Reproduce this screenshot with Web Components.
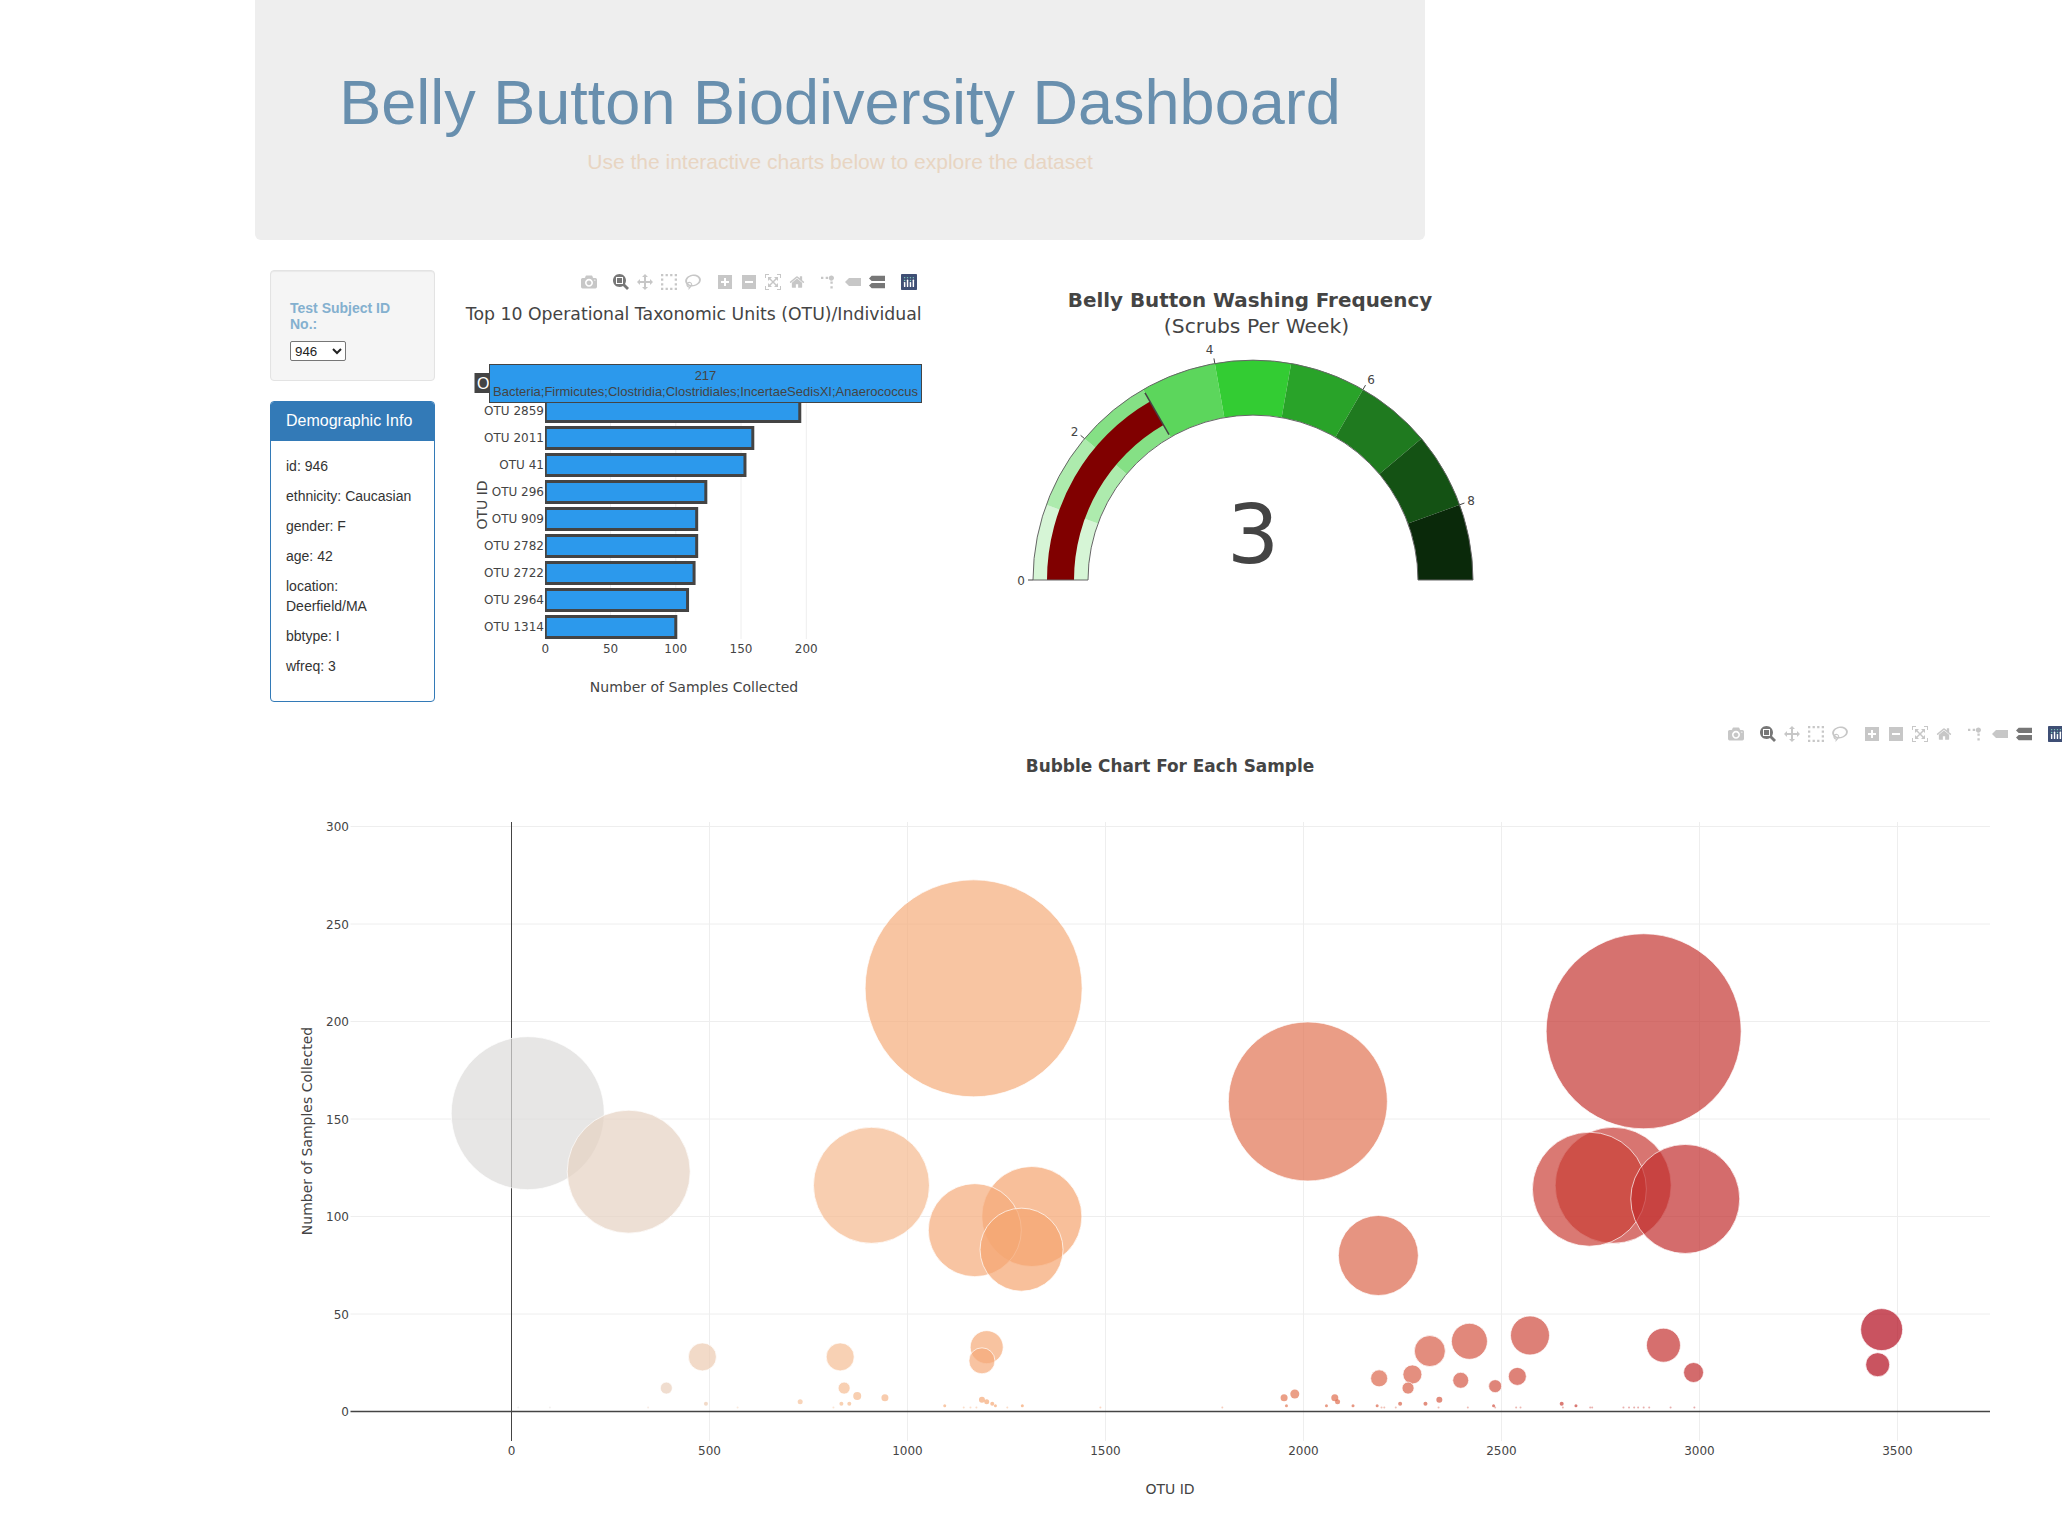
<!DOCTYPE html>
<html lang="en">
<head>
<meta charset="utf-8">
<title>Belly Button Biodiversity Dashboard</title>
<style>
html, body { margin: 0; height: 100%; overflow: hidden; background: #fff; }
body { font-family: "Liberation Sans", Arial, sans-serif; font-size: 14px; color: #333; }
.top-row { display: flex; align-items: flex-start; margin-top: 30px; padding-left: 270px; }
</style>
</head>
<body>
<bb-jumbotron>
	<span slot="title">Belly Button Biodiversity Dashboard</span>
	<span slot="lead">Use the interactive charts below to explore the dataset</span>
</bb-jumbotron>
<div class="top-row">
	<bb-sidebar>
		<bb-selector label="Test Subject ID No.:" value="946"></bb-selector>
		<bb-panel heading="Demographic Info">
			<p>id: 946</p>
			<p>ethnicity: Caucasian</p>
			<p>gender: F</p>
			<p>age: 42</p>
			<p>location: Deerfield/MA</p>
			<p>bbtype: I</p>
			<p>wfreq: 3</p>
		</bb-panel>
	</bb-sidebar>
	<bb-bar-chart></bb-bar-chart>
	<bb-gauge></bb-gauge>
</div>
<bb-bubble-chart></bb-bubble-chart>

<script>
// rutas de los iconos de la barra de plotly: [ancho, alto, ascent, path]
const ICONS = {
	camera: [1000, 1000, 850, 'M500 450c-83 0-150-67-150-150 0-83 67-150 150-150 83 0 150 67 150 150 0 83-67 150-150 150z m400 150h-120c-16 0-34 13-39 29l-31 93c-6 15-23 28-40 28h-340c-16 0-34-13-39-28l-31-94c-6-15-23-28-40-28h-120c-55 0-100-45-100-100v-450c0-55 45-100 100-100h800c55 0 100 45 100 100v450c0 55-45 100-100 100z m-400-550c-138 0-250 112-250 250 0 138 112 250 250 250 138 0 250-112 250-250 0-138-112-250-250-250z m365 380c-19 0-35 16-35 35 0 19 16 35 35 35 19 0 35-16 35-35 0-19-16-35-35-35z'],
	zoom: [1000, 1000, 850, 'm1000-25l-250 251c40 63 63 138 63 218 0 224-182 406-407 406-224 0-406-182-406-406s183-406 407-406c80 0 155 22 218 62l250-250 125 125z m-812 250l0 438 437 0 0-438-437 0z m62 375l313 0 0-312-313 0 0 312z'],
	pan: [1000, 1000, 850, 'm1000 350l-187 188 0-125-250 0 0 250 125 0-188 187-187-187 125 0 0-250-250 0 0 125-188-188 186-187 0 125 252 0 0-250-125 0 187-188 188 188-125 0 0 250 250 0 0-126 187 188z'],
	select: [1000, 1000, 850, 'm0 850l0-143 143 0 0 143-143 0z m286 0l0-143 143 0 0 143-143 0z m285 0l0-143 143 0 0 143-143 0z m286 0l0-143 143 0 0 143-143 0z m-857-286l0-143 143 0 0 143-143 0z m857 0l0-143 143 0 0 143-143 0z m-857-285l0-143 143 0 0 143-143 0z m857 0l0-143 143 0 0 143-143 0z m-857-286l0-143 143 0 0 143-143 0z m286 0l0-143 143 0 0 143-143 0z m285 0l0-143 143 0 0 143-143 0z m286 0l0-143 143 0 0 143-143 0z'],
	lasso: [1031, 1000, 850, 'm1018 538c-36 207-290 336-568 286-277-48-473-256-436-463 10-57 36-108 76-151-13-66 11-137 68-183 34-28 75-41 114-42l-55-70 0 0c-2-1-3-2-4-3-10-14-8-34 5-45 14-11 34-8 45 4 1 1 2 3 2 5l0 0 113 140c16 11 31 24 45 40 4 3 6 7 8 11 48-3 100 0 151 9 278 48 473 255 436 462z m-624-379c-80 14-149 48-197 96 42 42 109 47 156 9 33-26 47-66 41-105z m-187-74c-19 16-33 37-39 60 50-32 109-55 174-68-42-25-95-24-135 8z m360 75c-34-7-69-9-102-8 8 62-16 128-68 170-73 59-175 54-244-5-9 20-16 40-20 61-28 159 121 317 333 354s407-60 434-217c28-159-121-318-333-355z'],
	plus: [875, 1000, 850, 'm1 787l0-875 875 0 0 875-875 0z m687-500l-187 0 0-187-125 0 0 187-188 0 0 125 188 0 0 187 125 0 0-187 187 0 0-125z'],
	minus: [875, 1000, 850, 'm0 788l0-876 875 0 0 876-875 0z m688-500l-500 0 0 125 500 0 0-125z'],
	autoscale: [1000, 1000, 850, 'm250 850l-187 0-63 0 0-62 0-188 63 0 0 188 187 0 0 62z m688 0l-188 0 0-62 188 0 0-188 62 0 0 188 0 62-62 0z m-875-938l0 188-63 0 0-188 0-62 63 0 187 0 0 62-187 0z m875 188l0-188-188 0 0-62 188 0 62 0 0 62 0 188-62 0z m-125 188l-1 0-93-94-156 156 156 156 92-93 2 0 0 250-250 0 0-2 93-92-156-156-156 156 94 92 0 2-250 0 0-250 0 0 93 93 157-156-157-156-93 94 0 0 0-250 250 0 0 0-94 93 156 157 156-157-93-93 0 0 250 0 0 250z'],
	home: [928.6, 1000, 850, 'm786 296v-267q0-15-11-26t-25-10h-214v214h-143v-214h-214q-15 0-25 10t-11 26v267q0 1 0 2t0 2l321 264 321-264q1-1 1-4z m124 39l-34-41q-5-5-12-6h-2q-7 0-12 3l-386 322-386-322q-7-4-13-4-7 2-12 7l-35 41q-4 5-3 13t6 12l401 334q18 15 42 15t43-15l136-114v109q0 8 5 13t13 5h107q8 0 13-5t5-13v-227l122-102q5-5 6-12t-4-13z'],
	spike: [630, 630, 570, 'M512 409c0-57-46-104-103-104-57 0-104 47-104 104 0 57 47 103 104 103 57 0 103-46 103-103z m-327-39l92 0 0 92-92 0 0-92z m-185 0l92 0 0 92-92 0 0-92z m370-186l92 0 0 93-92 0 0-93z m0-184l92 0 0 92-92 0 0-92z'],
	closest: [1500, 1000, 850, 'm375 725l0 0-375-375 375-374 0-1 1125 0 0 750-1125 0z'],
	compare: [1125, 1000, 850, 'm187 786l0 2-187-188 188-187 0 0 937 0 0 373-938 0z m0-499l0 1-187-188 188-188 0 0 937 0 0 376-938-1z']
};

function iconSvg(name, active) {
	const [w, h, asc, d] = ICONS[name];
	const fill = active ? '#777' : '#c7c7c7';
	return `<svg width="16" height="16" viewBox="0 0 ${w} ${h}"><path fill="${fill}" transform="matrix(1 0 0 -1 0 ${asc})" d="${d}"/></svg>`;
}

class BbJumbotron extends HTMLElement {
	constructor() {
		super();
		this.attachShadow({ mode: 'open' });
	}

	connectedCallback() {
		this.shadowRoot.innerHTML = `
		<style>
		:host { display: block; box-sizing: border-box; width: 1170px; height: 240px; margin-left: 255px; padding-top: 68px; background: #eee; border-radius: 0 0 6px 6px; text-align: center; }
		h1 { margin: 0 0 10px; font-size: 63px; font-weight: 500; line-height: 1.1; color: #688fae; }
		p { margin: 0; font-size: 21px; line-height: 30px; color: #e8d5c2; }
		</style>
		<h1><slot name="title"></slot></h1>
		<p><slot name="lead"></slot></p>
		`;
	}
}

class BbSidebar extends HTMLElement {
	constructor() {
		super();
		this.attachShadow({ mode: 'open' });
	}

	connectedCallback() {
		this.shadowRoot.innerHTML = `
		<style>
		:host { display: flex; flex-direction: column; gap: 20px; flex: none; width: 165px; }
		</style>
		<slot></slot>
		`;
	}
}

class BbSelector extends HTMLElement {
	constructor() {
		super();
		this.attachShadow({ mode: 'open' });
	}

	connectedCallback() {
		const value = this.getAttribute('value');
		this.shadowRoot.innerHTML = `
		<style>
		:host { display: block; box-sizing: border-box; height: 111px; padding: 29px 19px 0; background: #f5f5f5; border: 1px solid #e3e3e3; border-radius: 4px; box-shadow: inset 0 1px 1px rgba(0,0,0,.05); }
		h5 { margin: 0 0 9px; font-size: 14px; font-weight: 700; line-height: 16px; color: #84b0cf; }
		select { display: block; width: 56px; height: 20px; padding: 0; font: 13.33px "Liberation Sans", Arial, sans-serif; color: #222; background: #fff; border: 1px solid #767676; border-radius: 2px; }
		</style>
		<h5>${this.getAttribute('label')}</h5>
		<select><option>${value}</option></select>
		`;
	}
}

class BbPanel extends HTMLElement {
	constructor() {
		super();
		this.attachShadow({ mode: 'open' });
	}

	connectedCallback() {
		this.shadowRoot.innerHTML = `
		<style>
		:host { display: block; box-sizing: border-box; height: 301px; background: #fff; border: 1px solid #337ab7; border-radius: 4px; overflow: hidden; }
		header { height: 39px; box-sizing: border-box; padding: 10px 15px; background: #337ab7; color: #fff; font-size: 16px; line-height: 18px; }
		.body { padding: 15px 15px 0; line-height: 20px; font-size: 14px; color: #333; }
		::slotted(p) { margin: 0 0 10px; }
		</style>
		<header>${this.getAttribute('heading')}</header>
		<div class="body"><slot></slot></div>
		`;
	}
}

class PlotModebar extends HTMLElement {
	constructor() {
		super();
		this.attachShadow({ mode: 'open' });
	}

	connectedCallback() {
		const groups = [['camera'], ['zoom', 'pan', 'select', 'lasso'], ['plus', 'minus', 'autoscale', 'home'], ['spike', 'closest', 'compare']];
		const on = ['zoom', 'compare'];
		const html = groups.map(g => `<div class="group">${g.map(n => `<div class="btn">${iconSvg(n, on.includes(n))}</div>`).join('')}</div>`).join('');
		this.shadowRoot.innerHTML = `
		<style>
		:host { display: flex; position: absolute; gap: 8px; }
		.group { display: flex; }
		.btn { width: 24px; height: 16px; display: flex; justify-content: center; }
		svg { display: block; }
		</style>
		${html}
		<div class="group"><div class="btn">
			<svg width="16" height="16" viewBox="0 0 132 132">
				<rect width="132" height="132" rx="6" fill="#3f4f75"/>
				<g fill="#80cfbe"><circle cx="30" cy="30" r="6"/><circle cx="54" cy="30" r="6"/><circle cx="78" cy="30" r="6"/><circle cx="102" cy="30" r="6"/><circle cx="30" cy="54" r="6"/><circle cx="78" cy="54" r="6"/></g>
				<g fill="#fff"><rect x="24" y="66" width="12" height="42" rx="5"/><rect x="48" y="46" width="12" height="62" rx="5"/><rect x="72" y="66" width="12" height="42" rx="5"/><rect x="96" y="46" width="12" height="62" rx="5"/></g>
			</svg>
		</div></div>
		`;
	}
}

class BbBarChart extends HTMLElement {
	constructor() {
		super();
		this.attachShadow({ mode: 'open' });
	}

	connectedCallback() {
		const x0 = 545.3, k = 1.305;
		// la primera fila queda tapada por la etiqueta flotante, por eso no lleva nombre
		const rows = [['', 217], ['OTU 2859', 195], ['OTU 2011', 159], ['OTU 41', 153], ['OTU 296', 123], ['OTU 909', 116], ['OTU 2782', 116], ['OTU 2722', 114], ['OTU 2964', 109], ['OTU 1314', 100]];
		let svg = '', bars = '';
		for (const t of [50, 100, 150, 200]) {
			const x = x0 + t * k;
			svg += `<line x1="${x}" x2="${x}" y1="370" y2="639" stroke="#eee"/>`;
		}
		rows.forEach(([name, v], i) => {
			const y = 384 + i * 27;
			bars += `<rect x="${x0}" y="${y - 10.5}" width="${v * k}" height="21" fill="#2c99ec" stroke="#444" stroke-width="3"/>`;
			if (name) svg += `<text x="544" y="${y + 4}" text-anchor="end">${name}</text>`;
		});
		for (const t of [0, 50, 100, 150, 200]) {
			svg += `<text x="${x0 + t * k}" y="652.5" text-anchor="middle">${t}</text>`;
		}
		this.shadowRoot.innerHTML = `
		<style>
		:host { display: block; position: relative; flex: none; width: 500px; height: 441px; margin-left: 25px; }
		svg { display: block; font-family: "DejaVu Sans", Verdana, sans-serif; font-size: 12px; fill: #444; }
		.title { font-size: 17.3px; }
		.axis { font-size: 14px; }
		.hover { font-family: "Liberation Sans", Arial, sans-serif; font-size: 13px; }
		.tag { font-family: "Liberation Sans", Arial, sans-serif; font-size: 16px; fill: #fff; }
		plot-modebar { left: 117px; top: 3.5px; }
		</style>
		<svg width="500" height="441" viewBox="460 270 500 441">
			<defs><clipPath id="plot"><rect x="545" y="360" width="400" height="290"/></clipPath></defs>
			<text class="title" x="693.7" y="320" text-anchor="middle">Top 10 Operational Taxonomic Units (OTU)/Individual</text>
			${svg}
			<g clip-path="url(#plot)">${bars}</g>
			<text class="axis" x="694" y="692" text-anchor="middle">Number of Samples Collected</text>
			<text class="axis" transform="translate(487 505) rotate(-90)" text-anchor="middle">OTU ID</text>
			<rect x="474.5" y="373" width="15" height="20" fill="#444"/>
			<text class="tag" x="477" y="388.5">O</text>
			<rect x="489.5" y="364.5" width="432" height="38" fill="#2c99ec" stroke="#444"/>
			<text class="hover" x="705.5" y="380" text-anchor="middle">217</text>
			<text class="hover" x="705.5" y="396" text-anchor="middle">Bacteria;Firmicutes;Clostridia;Clostridiales;IncertaeSedisXI;Anaerococcus</text>
		</svg>
		<plot-modebar></plot-modebar>
		`;
	}
}

class BbGauge extends HTMLElement {
	constructor() {
		super();
		this.attachShadow({ mode: 'open' });
	}

	// punto sobre el arco para un valor de 0 a 9
	point(v, r) {
		const a = Math.PI - (v / 9) * Math.PI;
		return [1253 + r * Math.cos(a), 580 - r * Math.sin(a)];
	}

	band(a, b, r0, r1) {
		const [x1, y1] = this.point(a, r1), [x2, y2] = this.point(b, r1);
		const [x3, y3] = this.point(b, r0), [x4, y4] = this.point(a, r0);
		return `M${x1} ${y1}A${r1} ${r1} 0 0 1 ${x2} ${y2}L${x3} ${y3}A${r0} ${r0} 0 0 0 ${x4} ${y4}Z`;
	}

	connectedCallback() {
		const steps = ['#d6f5d6', '#adebad', '#85e085', '#5cd65c', '#33cc33', '#29a329', '#1f7a1f', '#145214', '#0a290a'];
		const labels = { 0: [1021, 580], 2: [1074.5, 431], 4: [1209.5, 349.5], 6: [1371, 379], 8: [1471, 500] };
		let svg = '';
		steps.forEach((c, i) => {
			svg += `<path d="${this.band(i, i + 1, 165, 220)}" fill="${c}"/>`;
		});
		svg += `<path d="${this.band(0, 3, 179, 206)}" fill="#800000"/>`;
		svg += `<path d="${this.band(0, 9, 165, 220)}" fill="none" stroke="#666"/>`;
		const [tx1, ty1] = this.point(3, 168), [tx2, ty2] = this.point(3, 216);
		svg += `<line x1="${tx1}" y1="${ty1}" x2="${tx2}" y2="${ty2}" stroke="#444" stroke-width="1.5"/>`;
		for (const v of [0, 2, 4, 6, 8]) {
			const [a, b] = this.point(v, 220), [c, d] = this.point(v, 225);
			svg += `<line x1="${a}" y1="${b}" x2="${c}" y2="${d}" stroke="#444"/>`;
			svg += `<text x="${labels[v][0]}" y="${labels[v][1] + 4.5}" text-anchor="middle">${v}</text>`;
		}
		this.shadowRoot.innerHTML = `
		<style>
		:host { display: block; flex: none; width: 560px; height: 441px; }
		svg { display: block; font-family: "DejaVu Sans", Verdana, sans-serif; font-size: 12px; fill: #444; }
		.t1 { font-size: 19.9px; font-weight: 700; }
		.t2 { font-size: 20.3px; }
		.num { font-size: 82px; }
		</style>
		<svg width="560" height="441" viewBox="960 270 560 441">
			<text class="t1" x="1250" y="307" text-anchor="middle">Belly Button Washing Frequency</text>
			<text class="t2" x="1256.5" y="333" text-anchor="middle">(Scrubs Per Week)</text>
			${svg}
			<text class="num" x="1253" y="563" text-anchor="middle">3</text>
		</svg>
		`;
	}
}

class BbBubbleChart extends HTMLElement {
	constructor() {
		super();
		this.attachShadow({ mode: 'open' });
	}

	// escala "Reds" de plotly
	color(t) {
		const stops = [[0, 220, 220, 220], [0.2, 245, 195, 157], [0.4, 245, 160, 105], [1, 178, 10, 28]];
		for (let i = 1; i < stops.length; i++) {
			if (t <= stops[i][0]) {
				const a = stops[i - 1], b = stops[i];
				const f = (t - a[0]) / (b[0] - a[0]);
				return `rgb(${[1, 2, 3].map(j => Math.round(a[j] + (b[j] - a[j]) * f)).join(',')})`;
			}
		}
		return 'rgb(178,10,28)';
	}

	connectedCallback() {
		const x = v => 511.5 + v * 0.396;
		const y = v => 1411.5 - v * 1.95;
		// [otu, valor]
		const big = [[1167, 217], [2859, 195], [2011, 159], [41, 153], [296, 123], [2782, 116], [909, 116], [2722, 114], [2964, 109], [1314, 100], [1170, 93], [1288, 83], [2189, 80], [3460, 42], [2572, 39], [2419, 36], [2909, 34], [1200, 33], [2319, 31], [482, 28], [830, 28], [1188, 26], [3450, 24], [2985, 20], [2275, 19], [2540, 18], [2191, 17], [2397, 16], [2484, 13], [391, 12], [840, 12], [2264, 12]];
		const small = [[1978, 9], [873, 8], [943, 7], [1951, 7], [2079, 7], [1188, 6], [2343, 6], [729, 5], [1200, 5], [2086, 5], [491, 4], [833, 4], [853, 4], [1214, 4], [2244, 4], [2308, 4], [2652, 4], [1094, 3], [1222, 3], [1290, 3], [1957, 3], [2058, 3], [2125, 3], [2186, 3], [2480, 3], [2688, 3]];
		const tiny = [17, 97, 345, 571, 813, 1142, 1159, 1174, 1252, 1487, 1795, 2197, 2204, 2233, 2341, 2415, 2484, 2537, 2548, 2655, 2724, 2729, 2808, 2822, 2835, 2845, 2859, 2873, 2927, 2987].map(o => [o, 2]);
		const all = big.concat(small, tiny);
		let grid = '';
		for (const t of [500, 1000, 1500, 2000, 2500, 3000, 3500]) {
			grid += `<line x1="${x(t)}" x2="${x(t)}" y1="822" y2="1441" stroke="#eee"/>`;
		}
		for (const t of [50, 100, 150, 200, 250, 300]) {
			grid += `<line x1="350.5" x2="1990" y1="${y(t)}" y2="${y(t)}" stroke="#eee"/>`;
		}
		let labels = '';
		for (const t of [0, 500, 1000, 1500, 2000, 2500, 3000, 3500]) {
			labels += `<text x="${x(t)}" y="1455" text-anchor="middle">${t}</text>`;
		}
		for (const t of [0, 50, 100, 150, 200, 250, 300]) {
			labels += `<text x="349" y="${y(t) + 4.5}" text-anchor="end">${t}</text>`;
		}
		const dots = all.map(([o, v]) => `<circle cx="${x(o)}" cy="${y(v)}" r="${v / 2}" fill="${this.color((o - 17) / (3460 - 17))}" fill-opacity="${v > 2 ? 0.7 : 0.4}" stroke="#fff" stroke-width="${v > 10 ? 1 : 0}" stroke-opacity="0.7"/>`).join('');
		this.shadowRoot.innerHTML = `
		<style>
		:host { display: block; position: relative; width: 1782px; height: 807px; margin: 4px 0 0 280px; }
		svg { display: block; font-family: "DejaVu Sans", Verdana, sans-serif; font-size: 12px; fill: #444; }
		.title { font-size: 16.9px; font-weight: 700; }
		.axis { font-size: 14px; }
		plot-modebar { left: 1444px; top: 11px; }
		</style>
		<svg width="1782" height="807" viewBox="280 715 1782 807">
			${grid}
			<line x1="${x(0)}" x2="${x(0)}" y1="822" y2="1441" stroke="#444"/>
			<line x1="350.5" x2="1990" y1="${y(0)}" y2="${y(0)}" stroke="#444" stroke-width="1.5"/>
			${dots}
			${labels}
			<text class="title" x="1170" y="771.5" text-anchor="middle">Bubble Chart For Each Sample</text>
			<text class="axis" x="1170" y="1494" text-anchor="middle">OTU ID</text>
			<text class="axis" transform="translate(312 1131) rotate(-90)" text-anchor="middle">Number of Samples Collected</text>
		</svg>
		<plot-modebar></plot-modebar>
		`;
	}
}

customElements.define('bb-jumbotron', BbJumbotron);
customElements.define('bb-sidebar', BbSidebar);
customElements.define('bb-selector', BbSelector);
customElements.define('bb-panel', BbPanel);
customElements.define('plot-modebar', PlotModebar);
customElements.define('bb-bar-chart', BbBarChart);
customElements.define('bb-gauge', BbGauge);
customElements.define('bb-bubble-chart', BbBubbleChart);
</script>
</body>
</html>
